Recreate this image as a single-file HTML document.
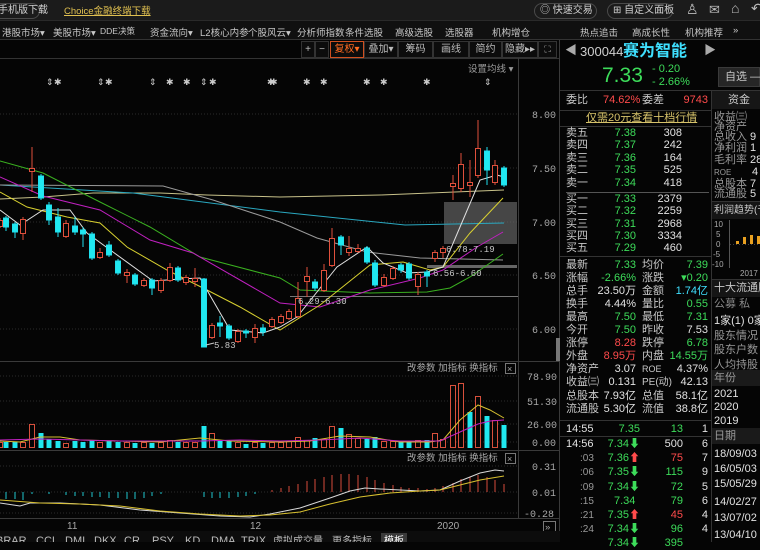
<!DOCTYPE html>
<html><head><meta charset="utf-8"><style>
*{margin:0;padding:0;box-sizing:border-box}
body{width:760px;height:542px;overflow:hidden;background:#050505;font-family:"Liberation Sans","Noto Sans CJK SC",sans-serif;color:#c8c8c8;position:relative;font-size:12px}
.a{position:absolute;white-space:nowrap;line-height:13px}
.top{position:absolute;left:0;top:0;width:760px;height:21px;background:#1b1b1b;border-bottom:1px solid #2a2a2a}
.menu{position:absolute;left:0;top:21px;width:760px;height:19px;background:#101010;border-bottom:1px solid #333}
.menu span{position:absolute;top:4px;font-size:9.5px;color:#c8c8c8}
.btn{position:absolute;border:1px solid #4a4a4a;border-radius:9px;height:16px;top:3px;font-size:10px;line-height:14px;color:#d0d0d0;padding:0 5px;white-space:nowrap}
.tb{position:absolute;top:41px;height:17px;border:1px solid #333;background:#0c0c0c;font-size:10px;line-height:15px;text-align:center;color:#bdbdbd}
.g{color:#3ddc5a}.r{color:#ff4b4b}.c{color:#3fe0ff}.w{color:#e2e2e2}.y{color:#e0c050}
.rp .a{font-size:11px}
.rt{text-align:right}
</style></head><body>
<div class="top"></div>
<div class="btn" style="left:-8px;width:48px">手机版下载</div>
<div class="a y" style="left:64px;top:5px;font-size:9.5px;text-decoration:underline">Choice金融终端下载</div>
<div class="btn" style="left:534px;width:63px">◎ 快速交易</div>
<div class="btn" style="left:607px;width:66px">⊞ 自定义面板</div>
<div class="a" style="left:686px;top:3px;font-size:14px;color:#bbb">♙</div>
<div class="a" style="left:709px;top:3px;font-size:13px;color:#bbb">✉</div>
<div class="a" style="left:731px;top:2px;font-size:14px;color:#bbb">⌂</div>
<div class="a" style="left:751px;top:2px;font-size:14px;color:#bbb">↶</div>
<div class="menu">
<span style="left:2px">港股市场▾</span><span style="left:53px">美股市场▾</span><span style="left:100px;font-size:8.5px">DDE决策</span>
<span style="left:150px">资金流向▾</span><span style="left:200px">L2核心内参</span><span style="left:248px">个股风云▾</span>
<span style="left:297px">分析师指数</span><span style="left:345px">条件选股</span><span style="left:395px">高级选股</span>
<span style="left:445px">选股器</span><span style="left:492px">机构增仓</span><span style="left:580px">热点追击</span>
<span style="left:632px">高成长性</span><span style="left:685px">机构推荐</span><span style="left:733px">»</span>
</div>
<div class="tb" style="left:301px;width:14px">+</div>
<div class="tb" style="left:315px;width:14px">−</div>
<div class="tb" style="left:330px;width:34px;border-color:#d05020;color:#ff6a20">复权▾</div>
<div class="tb" style="left:364px;width:34px">叠加▾</div>
<div class="tb" style="left:398px;width:35px">筹码</div>
<div class="tb" style="left:433px;width:36px">画线</div>
<div class="tb" style="left:469px;width:33px">简约</div>
<div class="tb" style="left:502px;width:36px">隐藏▸▸</div>
<div class="tb" style="left:538px;width:19px;font-size:9px">⛶</div>

<svg width="562" height="542" style="position:absolute;left:0;top:0" font-family="Liberation Mono,monospace">
<line x1="0" y1="58.5" x2="560" y2="58.5" stroke="#333"/>
<line x1="518.5" y1="58" x2="518.5" y2="518" stroke="#3a3a3a"/>
<line x1="559.5" y1="40" x2="559.5" y2="542" stroke="#3a3a3a"/>
<rect x="556" y="338" width="4" height="24" fill="#777"/>
<text x="468" y="72" font-size="9.5" fill="#9a9a9a" font-family="Liberation Sans,Noto Sans CJK SC,sans-serif">设置均线 ▾</text>
<g stroke="#2c2c2c" stroke-dasharray="1,2">
<line x1="0" y1="114" x2="518" y2="114"/><line x1="0" y1="168" x2="518" y2="168"/><line x1="0" y1="222" x2="518" y2="222"/><line x1="0" y1="275" x2="518" y2="275"/><line x1="0" y1="329" x2="518" y2="329"/>
<line x1="0" y1="376" x2="518" y2="376"/><line x1="0" y1="401" x2="518" y2="401"/><line x1="0" y1="424" x2="518" y2="424"/><line x1="0" y1="442" x2="518" y2="442"/>
<line x1="0" y1="466" x2="518" y2="466"/><line x1="0" y1="492" x2="518" y2="492"/><line x1="0" y1="513" x2="518" y2="513"/>
</g>
<g font-size="10" fill="#a8a8a8">
<text x="532" y="118">8.00</text><text x="532" y="172">7.50</text><text x="532" y="226">7.00</text><text x="532" y="279">6.50</text><text x="532" y="333">6.00</text>
<text x="527" y="380">78.90</text><text x="527" y="405">51.30</text><text x="527" y="428">26.00</text><text x="532" y="446">0.00</text>
<text x="532" y="470">0.31</text><text x="532" y="496">0.01</text><text x="524" y="517">-0.28</text>
</g>
<line x1="0" y1="361.5" x2="560" y2="361.5" stroke="#3a3a3a"/>
<line x1="0" y1="450.5" x2="560" y2="450.5" stroke="#3a3a3a"/>
<line x1="0" y1="518.5" x2="560" y2="518.5" stroke="#3a3a3a"/>
<g font-size="9.5" fill="#a8a8a8" font-family="Liberation Sans,Noto Sans CJK SC,sans-serif">
<text x="407" y="371">改参数 加指标 换指标</text><rect x="505.5" y="363.5" width="10" height="10" fill="none" stroke="#777"/><text x="507" y="372" font-size="9">×</text>
<text x="407" y="461">改参数 加指标 换指标</text><rect x="505.5" y="453.5" width="10" height="10" fill="none" stroke="#777"/><text x="507" y="462" font-size="9">×</text>
<text x="67" y="529" font-size="10">11</text><text x="250" y="529" font-size="10">12</text><text x="437" y="529" font-size="10">2020</text>
<rect x="543.5" y="521.5" width="12" height="10" fill="none" stroke="#777"/><text x="545" y="530">»</text>
</g>
<rect x="0" y="531" width="560" height="11" fill="#0c0c0c"/>
<g font-size="11" fill="#bbb" font-family="Liberation Sans,Noto Sans CJK SC,sans-serif">
<rect x="381" y="533" width="26" height="10" fill="#3a3a3a"/>
<text x="-4" y="544">BRAR</text><text x="36" y="544">CCI</text><text x="65" y="544">DMI</text><text x="94" y="544">DKX</text><text x="124" y="544">CR</text><text x="152" y="544">PSY</text><text x="185" y="544">KD</text><text x="211" y="544">DMA</text><text x="241" y="544">TRIX</text><text x="273" y="544" font-size="10">虚拟成交量</text><text x="332" y="544" font-size="10">更多指标</text><text x="384" y="544" fill="#fff" font-size="10">模板</text>
</g>
<g font-size="9" fill="#ccc">
<text x="46" y="85">⇕</text><text x="54" y="85">✱</text><text x="97" y="85">⇕</text><text x="105" y="85">✱</text>
<text x="149" y="85">⇕</text><text x="166" y="85">✱</text><text x="183" y="85">✱</text><text x="200" y="85">⇕</text><text x="209" y="85">✱</text>
<text x="267" y="85">✱</text><text x="270" y="85">✱</text><text x="303" y="85">✱</text><text x="320" y="85">✱</text><text x="363" y="85">✱</text><text x="380" y="85">✱</text><text x="423" y="85">✱</text><text x="484" y="85">⇕</text>
</g>
<rect x="444" y="202" width="73" height="42" fill="#6a6a6a" opacity="0.65"/>
<rect x="427" y="265" width="90" height="3" fill="#666"/>
<line x1="290" y1="296.5" x2="518" y2="296.5" stroke="#777"/>
<g fill="none" stroke-width="1">
<polyline stroke="#c8c28a" points="0,199 43,197 93,193 160,193 207,195 280,197 380,195 504,190"/>
<polyline stroke="#2aa8c0" points="0,185 133,193 280,212 405,225 504,223"/>
<polyline stroke="#9a9a9a" points="0,185 163,186 213,200 280,222 317,238 367,252 420,258 503,260"/>
<polyline stroke="#3ab020" points="0,161 43,173 100,202 150,227 200,257 280,278 300,290 370,293 427,292 450,288 470,277 503,254"/>
<polyline stroke="#c020c0" points="0,177 43,196 100,210 150,240 193,253 280,303 320,307 370,290 420,278 443,270 477,247 503,232"/>
<polyline stroke="#d8d030" points="0,192 27,207 67,217 100,223 127,247 167,270 207,290 240,307 280,330 320,305 370,265 403,262 430,270 443,267 470,233 503,198"/>
<polyline stroke="#e0e0e0" points="0,210 20,225 43,210 70,210 87,233 113,252 153,281 180,279 200,278 230,330 263,333 280,327 297,317 337,267 367,247 383,263 407,273 427,272 443,267 460,227 480,180 497,175 504,177"/>
</g>
<g stroke-width="1">
<g stroke="#e0503c" fill="#050505">
<line x1="0" y1="218" x2="0" y2="228"/><rect x="-2.5" y="220.5" width="5" height="6"/>
<line x1="23" y1="217" x2="23" y2="240"/><rect x="20.5" y="219.5" width="5" height="14"/>
<line x1="32" y1="147" x2="32" y2="192"/><rect x="29.5" y="168.5" width="5" height="3"/>
<line x1="66" y1="220" x2="66" y2="238"/><rect x="63.5" y="223.5" width="5" height="13"/>
<line x1="100" y1="248" x2="100" y2="259"/><rect x="97.5" y="252.5" width="5" height="5"/>
<line x1="127" y1="269" x2="127" y2="283"/><rect x="124.5" y="272.5" width="5" height="3"/>
<line x1="144" y1="278" x2="144" y2="287"/><rect x="141.5" y="280.5" width="5" height="5"/>
<line x1="161" y1="278" x2="161" y2="293"/><rect x="158.5" y="280.5" width="5" height="10"/>
<line x1="170" y1="263" x2="170" y2="282"/><rect x="167.5" y="267.5" width="5" height="13"/>
<line x1="186" y1="275" x2="186" y2="285"/><rect x="183.5" y="277.5" width="5" height="5"/>
<line x1="195" y1="268" x2="195" y2="287"/><rect x="192.5" y="278.5" width="5" height="3"/>
<line x1="212" y1="323" x2="212" y2="339"/><rect x="209.5" y="325.5" width="5" height="12"/>
<line x1="238" y1="329" x2="238" y2="343"/><rect x="235.5" y="331.5" width="5" height="10"/>
<line x1="255" y1="324" x2="255" y2="343"/><rect x="252.5" y="328.5" width="5" height="9"/>
<line x1="272" y1="317" x2="272" y2="328"/><rect x="269.5" y="319.5" width="5" height="7"/>
<line x1="281" y1="314" x2="281" y2="324"/><rect x="278.5" y="316.5" width="5" height="6"/>
<line x1="289" y1="309" x2="289" y2="320"/><rect x="286.5" y="311.5" width="5" height="7"/>
<line x1="298" y1="282" x2="298" y2="318"/><rect x="295.5" y="298.5" width="5" height="18"/>
<line x1="307" y1="267" x2="307" y2="297"/><rect x="304.5" y="276.5" width="5" height="5"/>
<line x1="324" y1="264" x2="324" y2="292"/><rect x="321.5" y="270.5" width="5" height="20"/>
<line x1="332" y1="228" x2="332" y2="267"/><rect x="329.5" y="238.5" width="5" height="27"/>
<line x1="349" y1="236" x2="349" y2="256"/><rect x="346.5" y="248.5" width="5" height="4"/>
<line x1="358" y1="244" x2="358" y2="253"/><rect x="355.5" y="248.5" width="5" height="3"/>
<line x1="384" y1="274" x2="384" y2="287"/><rect x="381.5" y="277.5" width="5" height="8"/>
<line x1="393" y1="266" x2="393" y2="280"/><rect x="390.5" y="268.5" width="5" height="10"/>
<line x1="418" y1="272" x2="418" y2="295"/><rect x="415.5" y="274.5" width="5" height="12"/>
<line x1="435" y1="250" x2="435" y2="262"/><rect x="432.5" y="252.5" width="5" height="6"/>
<line x1="443" y1="246" x2="443" y2="258"/><rect x="440.5" y="248.5" width="5" height="4"/>
<line x1="453" y1="175" x2="453" y2="200"/><rect x="450.5" y="183.5" width="5" height="3"/>
<line x1="461" y1="153" x2="461" y2="192"/><rect x="458.5" y="164.5" width="5" height="24"/>
<line x1="470" y1="160" x2="470" y2="197"/><rect x="467.5" y="182.5" width="5" height="3"/>
<line x1="478" y1="120" x2="478" y2="178"/><rect x="475.5" y="148.5" width="5" height="27"/>
<line x1="495" y1="160" x2="495" y2="185"/><rect x="492.5" y="165.5" width="5" height="17"/>
</g>
<g stroke="#20e0ee" fill="#20e8f0">
<line x1="6" y1="216" x2="6" y2="231"/><rect x="3.5" y="218" width="5" height="9"/>
<line x1="15" y1="222" x2="15" y2="238"/><rect x="12.5" y="224" width="5" height="8"/>
<line x1="41" y1="174" x2="41" y2="200"/><rect x="38.5" y="176" width="5" height="22"/>
<line x1="49" y1="202" x2="49" y2="225"/><rect x="46.5" y="205" width="5" height="15"/>
<line x1="58" y1="208" x2="58" y2="237"/><rect x="55.5" y="217" width="5" height="15"/>
<line x1="75" y1="217" x2="75" y2="235"/><rect x="72.5" y="226" width="5" height="6"/>
<line x1="83" y1="227" x2="83" y2="247"/><rect x="80.5" y="230" width="5" height="4"/>
<line x1="92" y1="232" x2="92" y2="260"/><rect x="89.5" y="234" width="5" height="24"/>
<line x1="109" y1="241" x2="109" y2="257"/><rect x="106.5" y="245" width="5" height="10"/>
<line x1="118" y1="259" x2="118" y2="275"/><rect x="115.5" y="261" width="5" height="12"/>
<line x1="135" y1="273" x2="135" y2="286"/><rect x="132.5" y="275" width="5" height="9"/>
<line x1="152" y1="278" x2="152" y2="295"/><rect x="149.5" y="280" width="5" height="8"/>
<line x1="178" y1="266" x2="178" y2="282"/><rect x="175.5" y="268" width="5" height="12"/>
<line x1="204" y1="278" x2="204" y2="347"/><rect x="201.5" y="279" width="5" height="68"/>
<line x1="220" y1="316" x2="220" y2="337"/><rect x="217.5" y="323" width="5" height="3"/>
<line x1="229" y1="324" x2="229" y2="340"/><rect x="226.5" y="326" width="5" height="12"/>
<line x1="246" y1="329" x2="246" y2="338"/><rect x="243.5" y="331" width="5" height="2"/>
<line x1="263" y1="324" x2="263" y2="336"/><rect x="260.5" y="328" width="5" height="4"/>
<line x1="315" y1="279" x2="315" y2="291"/><rect x="312.5" y="282" width="5" height="6"/>
<line x1="341" y1="235" x2="341" y2="255"/><rect x="338.5" y="237" width="5" height="8"/>
<line x1="367" y1="246" x2="367" y2="264"/><rect x="364.5" y="248" width="5" height="14"/>
<line x1="375" y1="260" x2="375" y2="287"/><rect x="372.5" y="263" width="5" height="22"/>
<line x1="401" y1="263" x2="401" y2="273"/><rect x="398.5" y="265" width="5" height="5"/>
<line x1="409" y1="262" x2="409" y2="280"/><rect x="406.5" y="264" width="5" height="14"/>
<line x1="427" y1="270" x2="427" y2="287"/><rect x="424.5" y="272" width="5" height="4"/>
<line x1="487" y1="147" x2="487" y2="185"/><rect x="484.5" y="151" width="5" height="19"/>
<line x1="504" y1="166" x2="504" y2="187"/><rect x="501.5" y="168" width="5" height="17"/>
</g>
</g>
<g font-size="9" fill="#c8c8c8">
<line x1="206" y1="345" x2="214" y2="343" stroke="#ccc"/><text x="214" y="348">5.83</text>
<text x="298" y="304">6.29-6.30</text>
<text x="433" y="276">6.56-6.60</text>
<text x="446" y="252">6.78-7.19</text>
</g>
<g stroke="#d8503c" fill="#050505">
<rect x="-2.5" y="442.5" width="5" height="5"/><rect x="20.5" y="442.5" width="5" height="5"/><rect x="29.5" y="424.5" width="5" height="23"/>
<rect x="63.5" y="443.5" width="5" height="4"/><rect x="97.5" y="442.5" width="5" height="5"/><rect x="124.5" y="442.5" width="5" height="5"/>
<rect x="141.5" y="442.5" width="5" height="5"/><rect x="158.5" y="442.5" width="5" height="5"/><rect x="167.5" y="440.5" width="5" height="7"/>
<rect x="183.5" y="442.5" width="5" height="5"/><rect x="192.5" y="442.5" width="5" height="5"/><rect x="209.5" y="433.5" width="5" height="14"/>
<rect x="235.5" y="442.5" width="5" height="5"/><rect x="252.5" y="442.5" width="5" height="5"/><rect x="269.5" y="442.5" width="5" height="5"/>
<rect x="278.5" y="442.5" width="5" height="5"/><rect x="286.5" y="441.5" width="5" height="6"/><rect x="295.5" y="437.5" width="5" height="10"/>
<rect x="304.5" y="440.5" width="5" height="7"/><rect x="321.5" y="439.5" width="5" height="8"/><rect x="329.5" y="426.5" width="5" height="21"/>
<rect x="346.5" y="434.5" width="5" height="13"/><rect x="355.5" y="438.5" width="5" height="9"/><rect x="381.5" y="441.5" width="5" height="6"/>
<rect x="390.5" y="441.5" width="5" height="6"/><rect x="415.5" y="440.5" width="5" height="7"/><rect x="432.5" y="433.5" width="5" height="14"/>
<rect x="440.5" y="439.5" width="5" height="8"/><rect x="450.5" y="385.5" width="5" height="62"/><rect x="458.5" y="383.5" width="5" height="64"/>
<rect x="475.5" y="396.5" width="5" height="51"/><rect x="492.5" y="420.5" width="5" height="27"/>
</g>
<g fill="#20e8f0">
<rect x="3.5" y="442" width="5" height="6"/><rect x="12.5" y="442" width="5" height="6"/><rect x="38.5" y="433" width="5" height="15"/>
<rect x="46.5" y="439" width="5" height="9"/><rect x="55.5" y="441" width="5" height="7"/><rect x="72.5" y="441" width="5" height="7"/>
<rect x="80.5" y="442" width="5" height="6"/><rect x="89.5" y="440" width="5" height="8"/><rect x="106.5" y="441" width="5" height="7"/>
<rect x="115.5" y="442" width="5" height="6"/><rect x="132.5" y="443" width="5" height="5"/><rect x="149.5" y="443" width="5" height="5"/>
<rect x="175.5" y="442" width="5" height="6"/><rect x="201.5" y="426" width="5" height="22"/><rect x="217.5" y="441" width="5" height="7"/>
<rect x="226.5" y="441" width="5" height="7"/><rect x="243.5" y="444" width="5" height="4"/><rect x="260.5" y="443" width="5" height="5"/>
<rect x="312.5" y="438" width="5" height="10"/><rect x="338.5" y="428" width="5" height="20"/><rect x="364.5" y="439" width="5" height="9"/>
<rect x="372.5" y="437" width="5" height="11"/><rect x="398.5" y="441" width="5" height="7"/><rect x="406.5" y="441" width="5" height="7"/>
<rect x="424.5" y="440" width="5" height="8"/><rect x="467.5" y="412" width="5" height="36"/><rect x="484.5" y="416" width="5" height="32"/>
<rect x="501.5" y="425" width="5" height="23"/>
</g>
<polyline fill="none" stroke="#d8c030" points="0,441 20,442 40,437 60,437 80,440 120,441 160,442 200,438 230,441 280,442 310,441 340,436 370,437 400,442 430,442 443,440 460,420 478,405 490,410 504,418"/>
<polyline fill="none" stroke="#c020c0" points="0,440 40,439 80,440 120,441 160,441 200,441 240,440 280,441 320,440 360,438 400,441 440,441 460,432 478,424 490,421 504,420"/>
<g stroke="#20c8d0">
<line x1="6" y1="492" x2="6" y2="499"/><line x1="15" y1="492" x2="15" y2="499"/><line x1="23" y1="492" x2="23" y2="500"/><line x1="32" y1="492" x2="32" y2="494"/>
<line x1="49" y1="492" x2="49" y2="494"/><line x1="66" y1="492" x2="66" y2="495"/><line x1="75" y1="492" x2="75" y2="496"/><line x1="83" y1="492" x2="83" y2="496"/>
<line x1="92" y1="492" x2="92" y2="497"/><line x1="100" y1="492" x2="100" y2="497"/><line x1="109" y1="492" x2="109" y2="498"/><line x1="118" y1="492" x2="118" y2="498"/>
<line x1="127" y1="492" x2="127" y2="499"/><line x1="135" y1="492" x2="135" y2="499"/><line x1="144" y1="492" x2="144" y2="498"/><line x1="152" y1="492" x2="152" y2="496"/>
<line x1="161" y1="492" x2="161" y2="494"/><line x1="204" y1="492" x2="204" y2="497"/><line x1="212" y1="492" x2="212" y2="498"/><line x1="220" y1="492" x2="220" y2="498"/>
<line x1="229" y1="492" x2="229" y2="498"/><line x1="238" y1="492" x2="238" y2="497"/><line x1="246" y1="492" x2="246" y2="496"/><line x1="255" y1="492" x2="255" y2="494"/>
</g>
<g stroke="#d84a3c">
<line x1="272" y1="492" x2="272" y2="490"/><line x1="281" y1="492" x2="281" y2="488"/><line x1="289" y1="492" x2="289" y2="486"/><line x1="298" y1="492" x2="298" y2="484"/>
<line x1="307" y1="492" x2="307" y2="481"/><line x1="315" y1="492" x2="315" y2="479"/><line x1="324" y1="492" x2="324" y2="477"/><line x1="332" y1="492" x2="332" y2="475"/>
<line x1="341" y1="492" x2="341" y2="474"/><line x1="349" y1="492" x2="349" y2="474"/><line x1="358" y1="492" x2="358" y2="475"/><line x1="367" y1="492" x2="367" y2="477"/>
<line x1="375" y1="492" x2="375" y2="480"/><line x1="384" y1="492" x2="384" y2="483"/><line x1="393" y1="492" x2="393" y2="485"/><line x1="401" y1="492" x2="401" y2="487"/>
<line x1="409" y1="492" x2="409" y2="488"/><line x1="418" y1="492" x2="418" y2="488"/><line x1="427" y1="492" x2="427" y2="489"/><line x1="435" y1="492" x2="435" y2="488"/>
<line x1="443" y1="492" x2="443" y2="486"/><line x1="453" y1="492" x2="453" y2="483"/><line x1="461" y1="492" x2="461" y2="479"/><line x1="470" y1="492" x2="470" y2="477"/>
<line x1="478" y1="492" x2="478" y2="475"/><line x1="487" y1="492" x2="487" y2="477"/><line x1="495" y1="492" x2="495" y2="480"/><line x1="504" y1="492" x2="504" y2="484"/>
</g>
<polyline fill="none" stroke="#d8d8d8" points="0,503 20,506 30,503 60,503 100,505 140,510 180,513 220,516 250,517 270,514 300,508 330,498 350,491 365,488 380,489 420,491 440,490 460,481 480,473 495,470 504,471"/>
<polyline fill="none" stroke="#d8c030" points="0,500 40,503 80,504 120,506 160,511 200,514 240,516 270,515 300,512 330,504 360,497 390,493 420,491 440,490 460,485 480,480 504,476"/>
</svg>

<div class="rp">
<div class="a" style="left:565px;top:44px;font-size:12px;color:#aaa">◀</div>
<div class="a" style="left:580px;top:45px;font-size:13px;color:#cfcfcf">300044</div>
<div class="a c" style="left:623px;top:43px;font-size:16px;font-weight:bold;line-height:18px">赛为智能</div>
<div class="a" style="left:704px;top:44px;font-size:12px;color:#aaa">▶</div>
<div class="a g" style="left:602px;top:65px;font-size:21px;line-height:22px">7.33</div>
<div class="a g" style="left:652px;top:63px;font-size:11px">- 0.20</div>
<div class="a g" style="left:652px;top:76px;font-size:11px">- 2.66%</div>
<div class="a" style="left:718px;top:67px;width:42px;height:20px;background:#262626;border:1px solid #3a3a3a;font-size:11px;line-height:18px;padding-left:6px">自选 —</div>
<div style="position:absolute;left:560px;top:90px;width:200px;height:1px;background:#333"></div>
<div style="position:absolute;left:711px;top:90px;width:1px;height:452px;background:#333"></div>
<div style="position:absolute;left:712px;top:91px;width:48px;height:18px;background:#161616"></div>
<div class="a" style="left:728px;top:94px">资金</div>
<div class="a" style="left:566px;top:94px">委比</div><div class="a r" style="left:603px;top:94px">74.62%</div><div class="a" style="left:642px;top:94px">委差</div><div class="a r rt" style="left:670px;top:94px;width:38px">9743</div>
<div style="position:absolute;left:560px;top:110px;width:151px;height:1px;background:#333"></div>
<div class="a" style="left:586px;top:112px;text-decoration:underline;color:#d6c26a">仅需20元查看十档行情</div>
<div style="position:absolute;left:560px;top:126px;width:151px;height:1px;background:#333"></div>
<div style="position:absolute;left:566px;top:192px;width:143px;height:1px;background:#555"></div>
<div style="position:absolute;left:560px;top:256px;width:151px;height:1px;background:#333"></div>
<div class="a" style="left:566px;top:127px">卖五</div><div class="a g rt" style="left:600px;top:127px;width:36px">7.38</div><div class="a w rt" style="left:650px;top:127px;width:32px">308</div>
<div class="a" style="left:566px;top:139px">卖四</div><div class="a g rt" style="left:600px;top:139px;width:36px">7.37</div><div class="a w rt" style="left:650px;top:139px;width:32px">242</div>
<div class="a" style="left:566px;top:152px">卖三</div><div class="a g rt" style="left:600px;top:152px;width:36px">7.36</div><div class="a w rt" style="left:650px;top:152px;width:32px">164</div>
<div class="a" style="left:566px;top:164px">卖二</div><div class="a g rt" style="left:600px;top:164px;width:36px">7.35</div><div class="a w rt" style="left:650px;top:164px;width:32px">525</div>
<div class="a" style="left:566px;top:177px">卖一</div><div class="a g rt" style="left:600px;top:177px;width:36px">7.34</div><div class="a w rt" style="left:650px;top:177px;width:32px">418</div>
<div class="a" style="left:566px;top:193px">买一</div><div class="a g rt" style="left:600px;top:193px;width:36px">7.33</div><div class="a w rt" style="left:650px;top:193px;width:32px">2379</div>
<div class="a" style="left:566px;top:205px">买二</div><div class="a g rt" style="left:600px;top:205px;width:36px">7.32</div><div class="a w rt" style="left:650px;top:205px;width:32px">2259</div>
<div class="a" style="left:566px;top:218px">买三</div><div class="a g rt" style="left:600px;top:218px;width:36px">7.31</div><div class="a w rt" style="left:650px;top:218px;width:32px">2968</div>
<div class="a" style="left:566px;top:230px">买四</div><div class="a g rt" style="left:600px;top:230px;width:36px">7.30</div><div class="a w rt" style="left:650px;top:230px;width:32px">3334</div>
<div class="a" style="left:566px;top:242px">买五</div><div class="a g rt" style="left:600px;top:242px;width:36px">7.29</div><div class="a w rt" style="left:650px;top:242px;width:32px">460</div>

<div class="a" style="left:566px;top:259px">最新</div><div class="a g rt" style="left:590px;top:259px;width:46px">7.33</div><div class="a" style="left:642px;top:259px">均价</div><div class="a g rt" style="left:670px;top:259px;width:38px">7.39</div>
<div class="a" style="left:566px;top:272px">涨幅</div><div class="a g rt" style="left:590px;top:272px;width:46px">-2.66%</div><div class="a" style="left:642px;top:272px">涨跌</div><div class="a g rt" style="left:660px;top:272px;width:48px">▾0.20</div>
<div class="a" style="left:566px;top:285px">总手</div><div class="a w rt" style="left:590px;top:285px;width:46px">23.50万</div><div class="a" style="left:642px;top:285px">金额</div><div class="a c rt" style="left:660px;top:285px;width:48px">1.74亿</div>
<div class="a" style="left:566px;top:298px">换手</div><div class="a w rt" style="left:590px;top:298px;width:46px">4.44%</div><div class="a" style="left:642px;top:298px">量比</div><div class="a g rt" style="left:670px;top:298px;width:38px">0.55</div>
<div class="a" style="left:566px;top:311px">最高</div><div class="a g rt" style="left:590px;top:311px;width:46px">7.50</div><div class="a" style="left:642px;top:311px">最低</div><div class="a g rt" style="left:670px;top:311px;width:38px">7.31</div>
<div class="a" style="left:566px;top:324px">今开</div><div class="a g rt" style="left:590px;top:324px;width:46px">7.50</div><div class="a" style="left:642px;top:324px">昨收</div><div class="a w rt" style="left:670px;top:324px;width:38px">7.53</div>
<div class="a" style="left:566px;top:337px">涨停</div><div class="a r rt" style="left:590px;top:337px;width:46px">8.28</div><div class="a" style="left:642px;top:337px">跌停</div><div class="a g rt" style="left:670px;top:337px;width:38px">6.78</div>
<div class="a" style="left:566px;top:350px">外盘</div><div class="a r rt" style="left:590px;top:350px;width:46px">8.95万</div><div class="a" style="left:642px;top:350px">内盘</div><div class="a g rt" style="left:650px;top:350px;width:58px">14.55万</div>
<div class="a" style="left:566px;top:363px">净资产</div><div class="a w rt" style="left:590px;top:363px;width:46px">3.07</div><div class="a" style="left:642px;top:363px;font-size:9px">ROE</div><div class="a w rt" style="left:660px;top:363px;width:48px">4.37%</div>
<div class="a" style="left:566px;top:376px">收益㈢</div><div class="a w rt" style="left:590px;top:376px;width:46px">0.131</div><div class="a" style="left:642px;top:376px;font-size:10px">PE(动)</div><div class="a w rt" style="left:670px;top:376px;width:38px">42.13</div>
<div class="a" style="left:566px;top:390px">总股本</div><div class="a w rt" style="left:590px;top:390px;width:46px">7.93亿</div><div class="a" style="left:642px;top:390px">总值</div><div class="a w rt" style="left:660px;top:390px;width:48px">58.1亿</div>
<div class="a" style="left:566px;top:403px">流通股</div><div class="a w rt" style="left:590px;top:403px;width:46px">5.30亿</div><div class="a" style="left:642px;top:403px">流值</div><div class="a w rt" style="left:660px;top:403px;width:48px">38.8亿</div>
<div style="position:absolute;left:560px;top:420px;width:151px;height:1px;background:#333"></div>
<div style="position:absolute;left:560px;top:436px;width:151px;height:1px;background:#333"></div>
<div class="a w" style="left:566px;top:423px">14:55</div><div class="a g rt" style="left:600px;top:423px;width:40px">7.35</div><div class="a g rt" style="left:650px;top:423px;width:33px">13</div><div class="a w rt" style="left:690px;top:423px;width:18px">1</div>
<div class="a w" style="left:566px;top:438px">14:56</div><div class="a g rt" style="left:600px;top:438px;width:40px">7.34⬇</div><div class="a w rt" style="left:650px;top:438px;width:33px">500</div><div class="a w rt" style="left:690px;top:438px;width:18px">6</div>
<div class="a" style="left:580px;top:452px;font-size:10px;color:#999">:03</div><div class="a g rt" style="left:600px;top:452px;width:40px">7.36<span class="r">⬆</span></div><div class="a r rt" style="left:650px;top:452px;width:33px">75</div><div class="a w rt" style="left:690px;top:452px;width:18px">7</div>
<div class="a" style="left:580px;top:466px;font-size:10px;color:#999">:06</div><div class="a g rt" style="left:600px;top:466px;width:40px">7.35⬇</div><div class="a g rt" style="left:650px;top:466px;width:33px">115</div><div class="a w rt" style="left:690px;top:466px;width:18px">9</div>
<div class="a" style="left:580px;top:481px;font-size:10px;color:#999">:09</div><div class="a g rt" style="left:600px;top:481px;width:40px">7.34⬇</div><div class="a g rt" style="left:650px;top:481px;width:33px">72</div><div class="a w rt" style="left:690px;top:481px;width:18px">5</div>
<div class="a" style="left:580px;top:495px;font-size:10px;color:#999">:15</div><div class="a g" style="left:614px;top:495px">7.34</div><div class="a g rt" style="left:650px;top:495px;width:33px">79</div><div class="a w rt" style="left:690px;top:495px;width:18px">6</div>
<div class="a" style="left:580px;top:509px;font-size:10px;color:#999">:21</div><div class="a g rt" style="left:600px;top:509px;width:40px">7.35<span class="r">⬆</span></div><div class="a r rt" style="left:650px;top:509px;width:33px">45</div><div class="a w rt" style="left:690px;top:509px;width:18px">4</div>
<div class="a" style="left:580px;top:523px;font-size:10px;color:#999">:24</div><div class="a g rt" style="left:600px;top:523px;width:40px">7.34⬇</div><div class="a g rt" style="left:650px;top:523px;width:33px">96</div><div class="a w rt" style="left:690px;top:523px;width:18px">4</div>
<div class="a g rt" style="left:600px;top:537px;width:40px">7.34⬇</div><div class="a g rt" style="left:650px;top:537px;width:33px">395</div>

<div class="a" style="left:714px;top:111px;color:#999">收益㈢</div>
<div class="a" style="left:714px;top:121px;color:#999">净资产</div>
<div class="a" style="left:714px;top:131px;color:#999">总收入</div><div class="a w" style="left:750px;top:131px">9</div>
<div class="a" style="left:714px;top:142px;color:#999">净利润</div><div class="a w" style="left:750px;top:142px">1</div>
<div class="a" style="left:714px;top:154px;color:#999">毛利率</div><div class="a w" style="left:750px;top:154px">28</div>
<div class="a" style="left:714px;top:166px;color:#999;font-size:8px">ROE</div><div class="a w" style="left:752px;top:166px">4</div>
<div class="a" style="left:714px;top:178px;color:#999">总股本</div><div class="a w" style="left:750px;top:178px">7</div>
<div class="a" style="left:714px;top:188px;color:#999">流通股</div><div class="a w" style="left:750px;top:188px">5</div>
<div style="position:absolute;left:712px;top:201px;width:48px;height:18px;background:#151515;border-top:1px solid #333"></div>
<div class="a" style="left:714px;top:204px;font-size:10px">利润趋势(千</div>
<svg width="48" height="60" style="position:absolute;left:712px;top:218px" font-family="Liberation Sans,sans-serif">
<line x1="17.5" y1="2" x2="17.5" y2="50" stroke="#555"/>
<g font-size="8" fill="#aaa"><text x="2" y="9">10</text><text x="4" y="19">5</text><text x="4" y="29">0</text><text x="1" y="39">-5</text><text x="0" y="49">-10</text></g>
<line x1="18" y1="26.5" x2="48" y2="26.5" stroke="#444" stroke-dasharray="1,2"/>
<rect x="24" y="23" width="3" height="3" fill="#e8a020"/><rect x="31" y="19" width="3" height="7" fill="#e8a020"/><rect x="38" y="17" width="3" height="9" fill="#e8a020"/><rect x="45" y="18" width="3" height="8" fill="#e8a020"/>
<text x="28" y="58" font-size="8" fill="#aaa">2017</text>
</svg>
<div style="position:absolute;left:712px;top:279px;width:48px;height:18px;background:#151515;border-top:1px solid #333"></div>
<div class="a" style="left:714px;top:282px">十大流通股东</div>
<div class="a" style="left:714px;top:298px;color:#888">公募 私</div>
<div class="a w" style="left:714px;top:315px">1家(1) 0家</div>
<div class="a" style="left:714px;top:330px;color:#999">股东情况</div>
<div class="a" style="left:714px;top:344px;color:#999">股东户数</div>
<div class="a" style="left:714px;top:359px;color:#999">人均持股</div>
<div style="position:absolute;left:712px;top:370px;width:48px;height:16px;background:#1a1a1a"></div>
<div class="a" style="left:714px;top:372px;color:#999">年份</div>
<div class="a w" style="left:714px;top:388px">2021</div>
<div class="a w" style="left:714px;top:401px">2020</div>
<div class="a w" style="left:714px;top:415px">2019</div>
<div style="position:absolute;left:712px;top:428px;width:48px;height:16px;background:#1a1a1a"></div>
<div class="a" style="left:714px;top:430px;color:#999">日期</div>
<div class="a w" style="left:714px;top:448px">18/09/03</div>
<div class="a w" style="left:714px;top:463px">16/05/03</div>
<div class="a w" style="left:714px;top:478px">15/05/29</div>
<div class="a w" style="left:714px;top:496px">14/02/27</div>
<div class="a w" style="left:714px;top:512px">13/07/02</div>
<div class="a w" style="left:714px;top:529px">13/04/10</div>
</div>
</body></html>
